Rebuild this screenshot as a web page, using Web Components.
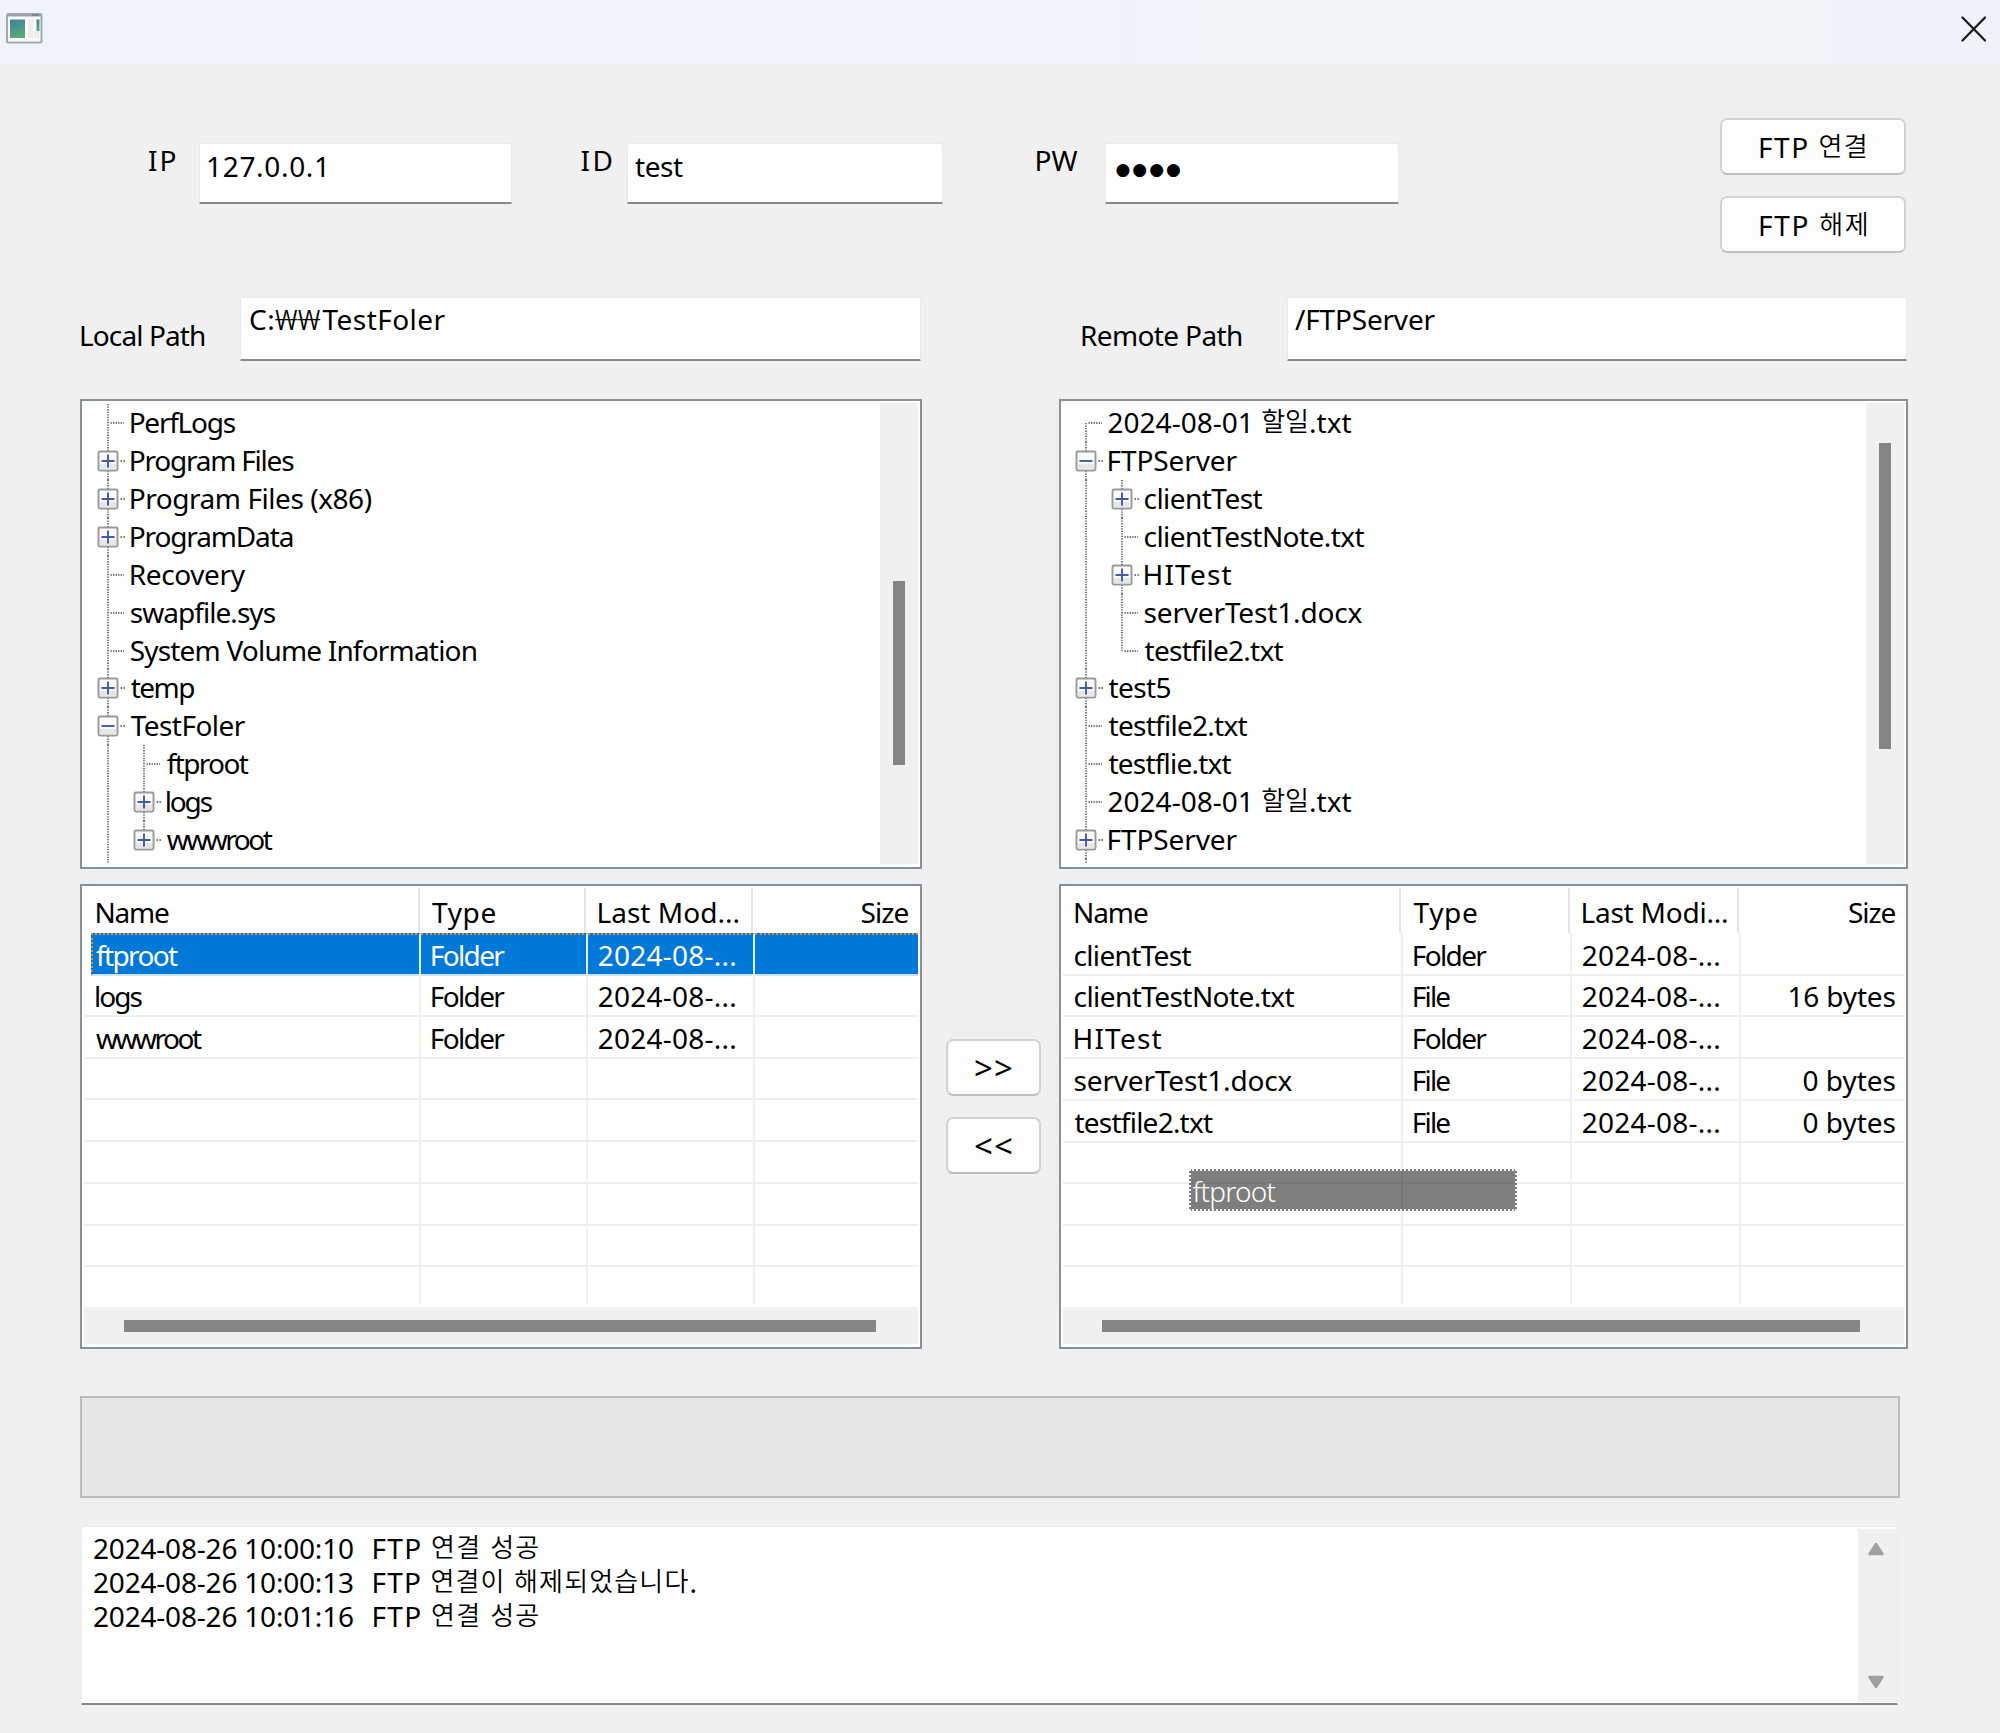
<!DOCTYPE html>
<html lang="ko">
<head>
<meta charset="utf-8">
<title>FTP Client</title>
<style>
html,body{margin:0;background:#f0f0f0}
body{width:2000px;height:1733px;overflow:hidden;font:28px/38px "Noto Sans","Noto Sans CJK KR",sans-serif;color:#000;font-variant-ligatures:none}
</style>
</head>
<body>
<ftp-window></ftp-window>
<script>
const ctx = document.createElement('canvas').getContext('2d');
const define = (tag, html, after) => customElements.define(tag, class extends HTMLElement {
  connectedCallback() {
    if (this.shadowRoot) return;
    this.attachShadow({mode: 'open'}).innerHTML = typeof html === 'function' ? html(this) : html;
    if (after) after(this);
  }
});

/* Single line of text whose ink spans exactly `w` pixels. */
define('ui-text', `<style>
:host{display:block;height:38px;line-height:38px;white-space:nowrap;flex:none}
span{display:inline-block;white-space:pre}
::slotted(i){font-style:normal;font-size:26px;line-height:0;vertical-align:2px;font-weight:350}
::slotted(b){display:inline-block;font-weight:300;letter-spacing:0;line-height:0;transform:scaleX(1.28);transform-origin:0 50%;margin-right:12px}
</style><span><slot></slot></span>`, el => {
  const w = +el.getAttribute('w'), span = el.shadowRoot.querySelector('span');
  const t = el.textContent, fixed = el.querySelector('b') ? el.querySelector('b').textContent.length : 0;
  const cs = getComputedStyle(el);
  ctx.font = cs.fontWeight + ' ' + cs.fontSize + ' ' + cs.fontFamily;
  const a = ctx.measureText(t[0]), b = ctx.measureText(t[t.length - 1]);
  const lsb = -a.actualBoundingBoxLeft, rsb = b.width - b.actualBoundingBoxRight;
  el.style.width = w + 'px';
  span.style.marginLeft = -lsb + 'px';
  const nat = span.getBoundingClientRect().width;
  span.style.letterSpacing = (w + lsb + rsb - nat) / (t.length - 1 - fixed) + 'px';
});

define('ui-field', `<style>
:host{display:block;box-sizing:border-box;background:#fff;border:1px solid #e9e9e9;border-bottom:2.5px solid #8a8a8a;border-radius:3px 3px 1px 1px;margin-left:-1px;margin-right:-1px;padding:var(--p,2px 0 0 9px)}
</style><slot></slot>`);

define('ui-button', `<style>
:host{display:flex;box-sizing:border-box;height:57px;justify-content:center;background:#fdfdfd;border:2px solid #d2d2d2;border-bottom-color:#bfbfbf;border-radius:7px;padding-top:var(--pt,8px)}
</style><slot></slot>`);

define('title-bar', `<style>
:host{display:flex;justify-content:space-between;height:65px;box-sizing:border-box;padding:13px 14px 0 6px;background:linear-gradient(90deg,#eff3fc 0,#eff3fb 45%,#eff4f9 62%,#eff4f9 90%,#eef2fb 100%)}
</style>
<svg width="37" height="31" viewBox="0 0 37 31">
<defs><linearGradient id="g" x1="0" y1="0" x2=".3" y2="1"><stop offset="0" stop-color="#3f7fa6"/><stop offset="1" stop-color="#58ab70"/></linearGradient></defs>
<rect x="1" y="1" width="34.5" height="28.5" rx="1.5" fill="#fafafa" stroke="#a3a8ad" stroke-width="2"/>
<path d="M2 2.2H35" stroke="#9ba1a9" stroke-width="2.4"/><path d="M26 2H33" stroke="#68788c" stroke-width="1.2"/>
<rect x="4" y="6.500" width="15" height="18.500" fill="url(#g)"/><rect x="22" y="6.500" width="5" height="18.500" fill="#ededed"/>
<rect x="28" y="18" width="5" height="7" fill="#eee"/><rect x="30.500" y="6.500" width="3" height="11.500" fill="url(#g)"/></svg>
<svg width="25" height="32" viewBox="0 0 25 32"><path d="M1.500 4.500L24 27.500M24 4.500L1.500 27.500" stroke="#1c1c1c" stroke-width="2.300" stroke-linecap="round"/></svg>`);

/* One tree row. `g` lists a glyph per level:
   | pass-through, T branch, L last branch, F first branch, P/M expandable, E expandable and last */
const cell = c => {
  const H = 37.93, m = 18.97, line = (y1, y2) => `<path d="M18 ${y1}V${y2}" stroke="#444" stroke-width="1.4" stroke-dasharray="1.3 1.25"/>`;
  let s = '';
  if (c === '|' || c === 'T') s += line(0, H);
  if (c === 'L') s += line(0, m);
  if (c === 'F') s += line(m, H);
  if ('TLF'.includes(c)) s += `<path d="M20.500 ${m}H34" stroke="#444" stroke-width="1.4" stroke-dasharray="1.3 1.25"/>`;
  if ('PME'.includes(c)) {
    s += line(0, m - 10); if (c !== 'E') s += line(m + 10, H);
    s += `<path d="M30.500 ${m}H36" stroke="#444" stroke-width="1.4" stroke-dasharray="1.500 1.400"/>
<rect x="8.500" y="${m - 9.5}" width="19" height="19" rx="1.500" fill="#fafafa" stroke="#999" stroke-width="1.900"/>
<rect x="10" y="${m + 3}" width="16" height="5.500" fill="#e6e6e6"/>
<path d="M11.500 ${m}H24.500${c === 'M' ? '' : `M18 ${m - 6.5}V${m + 6.5}`}" stroke="#4059a8" stroke-width="1.900"/>`;
  }
  return `<svg width="36" height="${H}" viewBox="0 0 36 ${H}">${s}</svg>`;
};
define('tree-row', el => `<style>
:host{display:flex;height:37.93px;overflow:visible}
svg{flex:none;display:block}
div{padding-left:var(--gap,4.700px);margin-top:-1px}
</style>${[...el.getAttribute('g')].map(cell).join('')}<div><slot></slot></div>`);

define('tree-view', `<style>
:host{display:flex;box-sizing:border-box;height:470px;border:2px solid #8a909a;background:#fff;overflow:hidden;padding:3px 2px 2px var(--pl,8px)}
.rows{flex:1}
.bar{width:38px;margin-top:-1px;height:461px;background:#f0f0f0;box-sizing:border-box;padding:var(--top) 0 0 13px}
.thumb{width:12px;height:var(--len);background:#858585}
.tail{height:5px;width:36px;overflow:hidden}
</style><div class="rows"><slot></slot><div class="tail">${cell('|')}</div></div><div class="bar"><div class="thumb"></div></div>`);

define('list-row', `<style>
:host{display:grid;grid-template-columns:var(--cols);height:41.8px;position:relative}
::slotted(div){box-sizing:border-box;border-right:2px solid #efefef;border-bottom:2px solid #efefef;padding:2.500px 0 0 10.800px}
::slotted(div:first-child){padding-left:12px}
::slotted(div:last-child){border-right:0;padding:2.500px var(--rp) 0 0;display:flex;justify-content:flex-end}
:host([head]){height:47px;grid-template-columns:var(--hcols)}
:host([head]) ::slotted(div){border-bottom:0;border-right-color:#e4e4e4;padding-top:4.500px;margin-top:2px;padding-left:12.500px}
:host([sel]){color:#fff}
:host([sel]) ::slotted(div){background:#0078d7;border-right-color:#e4eefa;border-top:2px dotted #e08a3c;padding-top:.5px;border-bottom-color:#cfe3f7}
:host([sel]) ::slotted(div:first-child){margin-left:7px;padding-left:3px;border-left:2px dotted #e08a3c}
</style><slot></slot>`);

define('list-view', `<style>
:host{display:flex;flex-direction:column;box-sizing:border-box;height:465px;border:2px solid #8a909a;background:#fff;padding:0 2px 2px;position:relative}
.body{height:418px;overflow:hidden;flex:none}
.bar{margin-top:3px;height:37px;background:#f0f0f0;display:flex;padding:13px var(--br) 0 var(--bl);box-sizing:border-box}
.thumb{height:12px;flex:1;background:#858585}
</style><div class="body"><slot></slot></div><div class="bar"><div class="thumb"></div></div><slot name="over"></slot>`);

define('drag-ghost', `<style>
:host{position:absolute;left:128px;top:283px;width:328px;height:42px;box-sizing:border-box;background:rgba(0,0,0,.505);border:2px dotted #eee;padding:1px 0 0 2px;color:#fff;font-weight:300}
</style><slot></slot>`);

define('log-view', `<style>
:host{display:flex;box-sizing:border-box;width:1817px;height:179px;background:#fff;border:1px solid #ebebeb;border-bottom:2.500px solid #8a8a8a;border-radius:3px 3px 1px 1px;padding:2px 0 0 12px}
.lines{flex:1;display:grid;grid-auto-rows:34.200px;align-content:start}
.bar{width:39px;height:173px;background:#f0f0f0;display:flex;flex-direction:column;justify-content:space-between;align-items:center;padding:13px 3px 13px 0;box-sizing:border-box}
</style><div class="lines"><slot></slot></div>
<div class="bar"><svg width="18" height="14"><path d="M9 2L15.500 12H2.500Z" fill="#a0a0a0" stroke="#a0a0a0" stroke-width="2.500" stroke-linejoin="round"/></svg>
<svg width="18" height="14"><path d="M9 12L15.500 2H2.500Z" fill="#a0a0a0" stroke="#a0a0a0" stroke-width="2.500" stroke-linejoin="round"/></svg></div>`);

const T = (w, t) => `<ui-text w="${w}">${t.replace(/</g, '&lt;').replace(/[가-힣]+/g, '<i>$&</i>').replace(/₩+/, '<b>$&</b>')}</ui-text>`;
const tree = rows => rows.map(([g, w, t]) => `<tree-row g="${g}">${T(w, t)}</tree-row>`).join('');
const list = (rows, total) => {
  const out = rows.map((r, i) => `<list-row ${i === 0 ? 'head' : r.sel ? 'sel' : ''}>${r.map(c => `<div>${c ? T(c[0], c[1]) : ''}</div>`).join('')}</list-row>`);
  while (out.length < total) out.push('<list-row><div></div><div></div><div></div><div></div></list-row>');
  return out.join('');
};
const D = [136.5, '2024-08-...'], FO = [73.5, 'Folder'], FI = [36.5, 'File'];
const selected = [[82, 'ftproot'], FO, D, null]; selected.sel = true;

define('ftp-window', `<style>
:host{display:block;width:2000px;height:1733px;background:#f0f0f0}
.conn{display:grid;grid-template-columns:200px 311px 117px 314px 163.500px 292px 322.500px 186px;height:232px;align-items:start}
.conn>ui-text{margin-top:76px}.conn>ui-field{margin-top:78px;height:61px;--p:3px 0 0 8px}
.btns,.move{display:flex;flex-direction:column;gap:21px}
.btns{grid-column:8;margin-top:53px}
.paths{display:grid;grid-template-columns:241px 679px 368px 618px;height:102px;align-items:start}
.paths>ui-field{height:64px}.paths>ui-text{margin-top:18.500px}
.panels{display:grid;grid-template-columns:842px 136.500px 849px;padding-left:80px}
.col{display:flex;flex-direction:column;gap:15px}
.move{padding:640px 17.500px 0 24px}
.move ui-text{font-size:33px}
.prog{box-sizing:border-box;margin:47px 0 28px 80px;width:1820px;height:102px;background:#e6e6e6;border:2px solid #bcbcbc}
.line{display:flex;gap:20.500px}
log-view{margin-left:81px}
.lt{--top:178px;--len:184px}.rt{--top:40px;--len:306px;--gap:4.500px;--pl:7.500px}
.ll{--cols:337px 167px 167px 1fr;--hcols:335.500px 166.500px 167px 1fr;--rp:9.500px;--bl:40px;--br:42px}
.rl{--cols:340.500px 169px 168.500px 1fr;--hcols:338.500px 169px 169px 1fr;--rp:8px;--bl:39px;--br:44px}
.conn>.pw{font-family:"DejaVu Sans";--p:0 0 0 10px}
</style>
<title-bar></title-bar>
<div class="conn">
 ${T(26.5, 'IP').replace('<ui-text', '<ui-text style="margin-left:149px"')}<ui-field>${T(116, '127.0.0.1')}</ui-field>
 ${T(30, 'ID').replace('<ui-text', '<ui-text style="margin-left:70.5px"')}<ui-field style="--p:3px 0 0 7px">${T(48, 'test')}</ui-field>
 ${T(41, 'PW').replace('<ui-text', '<ui-text style="margin-left:94.5px"')}<ui-field class="pw"><ui-text w="64.5" style="font-size:17px;margin-top:6px">●●●●</ui-text></ui-field>
 <div class="btns"><ui-button>${T(106, 'FTP 연결')}</ui-button><ui-button>${T(106, 'FTP 해제')}</ui-button></div>
</div>
<div class="paths">
 ${T(124, 'Local Path').replace('<ui-text', '<ui-text style="margin-left:81px"')}<ui-field>${T(195.5, 'C:₩₩TestFoler')}</ui-field>
 ${T(160, 'Remote Path').replace('<ui-text', '<ui-text style="margin-left:162px"')}<ui-field style="--p:2px 0 0 7px">${T(140.5, '/FTPServer')}</ui-field>
</div>
<div class="panels">
 <div class="col">
  <tree-view class="lt">${tree([['T',105,'PerfLogs'],['P',163.5,'Program Files'],['P',241,'Program Files (x86)'],['P',162,'ProgramData'],['T',115,'Recovery'],['T',145,'swapfile.sys'],['T',346,'System Volume Information'],['P',63.5,'temp'],['M',115,'TestFoler'],['|T',82,'ftproot'],['|P',46,'logs'],['|E',106,'wwwroot']])}</tree-view>
  <list-view class="ll">${list([[[72.5,'Name'],[63.5,'Type'],[140,'Last Mod...'],[47,'Size']], selected, [[46.5,'logs'],FO,D,null], [[106,'wwwroot'],FO,D,null]], 10)}</list-view>
 </div>
 <div class="move"><ui-button>${T(37, '>>')}</ui-button><ui-button>${T(37, '<<')}</ui-button></div>
 <div class="col">
  <tree-view class="rt">${tree([['F',243,'2024-08-01 할일.txt'],['M',129,'FTPServer'],['|P',118,'clientTest'],['|T',220,'clientTestNote.txt'],['|P',87,'HITest'],['|T',218,'serverTest1.docx'],['|L',139,'testfile2.txt'],['P',62,'test5'],['T',139,'testfile2.txt'],['T',123,'testflie.txt'],['T',243,'2024-08-01 할일.txt'],['P',129,'FTPServer']])}</tree-view>
  <list-view class="rl">${list([[[73,'Name'],[63.5,'Type'],[144.5,'Last Modi...'],[46.5,'Size']], [[117,'clientTest'],FO,D,null], [[220,'clientTestNote.txt'],FI,D,[106,'16 bytes']], [[87,'HITest'],FO,D,null], [[218,'serverTest1.docx'],FI,D,[92,'0 bytes']], [[138.5,'testfile2.txt'],FI,D,[92,'0 bytes']]], 10)}<drag-ghost slot="over">${T(83, 'ftproot')}</drag-ghost></list-view>
 </div>
</div>
<div class="prog"></div>
<log-view>
 <div class="line">${T(259, '2024-08-26 10:00:10')}${T(165, 'FTP 연결 성공')}</div>
 <div class="line">${T(259, '2024-08-26 10:00:13')}${T(322, 'FTP 연결이 해제되었습니다.')}</div>
 <div class="line">${T(259, '2024-08-26 10:01:16')}${T(165, 'FTP 연결 성공')}</div>
</log-view>`);
</script>
</body>
</html>
